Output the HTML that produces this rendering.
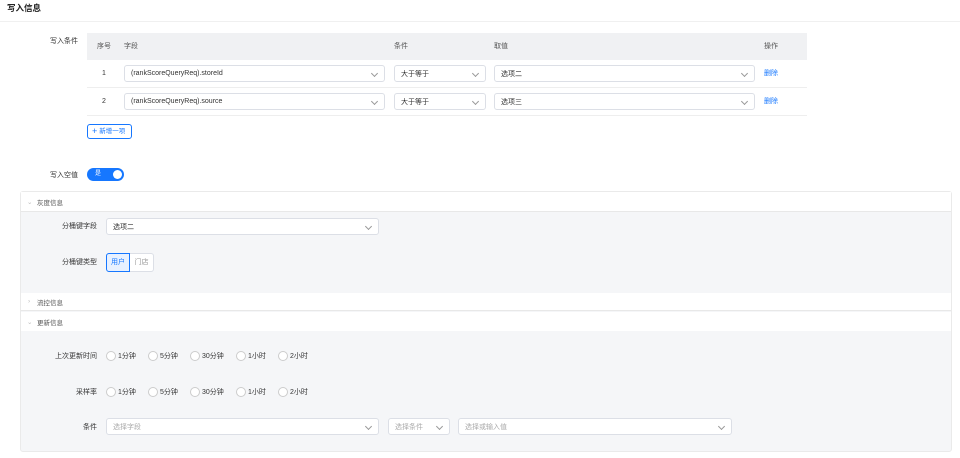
<!DOCTYPE html>
<html><head><meta charset="utf-8"><style>
*{box-sizing:border-box;margin:0;padding:0}
body{width:960px;height:458px;background:#fff;font-family:"Liberation Sans","Noto Sans CJK SC",sans-serif;font-size:7px;color:#333;position:relative;overflow:hidden}
.a{position:absolute;line-height:9px}
.sel{position:absolute;background:#fff;border:1px solid #dcdfe6;border-radius:3px;height:17px;display:flex;align-items:center;padding-left:6px;font-size:7px;color:#333}
.sel:after{content:"";position:absolute;right:7px;top:5px;width:4px;height:4px;border-right:1px solid #999;border-bottom:1px solid #999;transform:rotate(45deg)}
.ph{color:#aaa}
.lbl{position:absolute;text-align:right;font-size:7px;color:#333;line-height:9px}
.radio{position:absolute;font-size:7px;color:#333;padding-left:12px;height:9px;display:flex;align-items:center}
.radio:before{content:"";position:absolute;left:0;top:0;width:8px;height:8px;border:1px solid #ccc;border-radius:50%;background:#fff}
.sec{position:absolute;left:21px;width:930px;background:#fff;font-size:6.5px;color:#555;padding-left:16px;border-bottom:1px solid #e8e8e8;display:flex;align-items:center}
</style></head><body>
<div class="a" style="left:7px;top:4px;font-size:8.5px;font-weight:bold;color:#222">写入信息</div>
<div class="a" style="left:0;top:21px;width:960px;height:1px;background:#f0f0f0"></div>

<div class="lbl" style="left:40px;top:37px;width:38px">写入条件</div>
<div class="a" style="left:87px;top:33px;width:720px;height:27px;background:#f0f1f3"></div>
<div class="a" style="left:97px;top:42px;color:#555">序号</div>
<div class="a" style="left:124px;top:42px;color:#555">字段</div>
<div class="a" style="left:394px;top:42px;color:#555">条件</div>
<div class="a" style="left:494px;top:42px;color:#555">取值</div>
<div class="a" style="left:764px;top:42px;color:#555">操作</div>

<div class="a" style="left:102px;top:69px">1</div>
<div class="sel" style="left:124px;top:65px;width:261px">(rankScoreQueryReq).storeId</div>
<div class="sel" style="left:394px;top:65px;width:92px">大于等于</div>
<div class="sel" style="left:494px;top:65px;width:261px">选项二</div>
<div class="a" style="left:764px;top:69px;color:#1677ff">删除</div>
<div class="a" style="left:87px;top:87px;width:720px;height:1px;background:#eee"></div>

<div class="a" style="left:102px;top:97px">2</div>
<div class="sel" style="left:124px;top:93px;width:261px">(rankScoreQueryReq).source</div>
<div class="sel" style="left:394px;top:93px;width:92px">大于等于</div>
<div class="sel" style="left:494px;top:93px;width:261px">选项三</div>
<div class="a" style="left:764px;top:97px;color:#1677ff">删除</div>
<div class="a" style="left:87px;top:115px;width:720px;height:1px;background:#eee"></div>

<div class="a" style="left:87px;top:124px;width:45px;height:15px;border:1px solid #1677ff;border-radius:3px;color:#1677ff;display:flex;align-items:center;padding-left:4px;font-size:6.5px"><span style="font-size:9px;margin-right:2px">+</span>新增一项</div>

<div class="lbl" style="left:40px;top:171px;width:38px">写入空值</div>
<div class="a" style="left:87px;top:168px;width:37px;height:13px;border-radius:7px;background:#1677ff;color:#fff;font-size:6px;display:flex;align-items:center;padding-left:8px">是<span style="position:absolute;right:2px;top:2px;width:9px;height:9px;border-radius:50%;background:#fff"></span></div>

<div class="a" style="left:20px;top:191px;width:932px;height:261px;border:1px solid #eaeaea;border-radius:3px;background:#f5f6f8"></div>
<div class="sec" style="top:192px;height:20px"><span style="position:absolute;left:6px;color:#bbb">⌄</span>灰度信息</div>
<div class="lbl" style="left:50px;top:222px;width:47px">分桶键字段</div>
<div class="sel" style="left:106px;top:218px;width:273px">选项二</div>
<div class="lbl" style="left:50px;top:258px;width:47px">分桶键类型</div>
<div class="a" style="left:106px;top:253px;width:24px;height:19px;border:1px solid #1677ff;background:#e8f1ff;color:#1677ff;border-radius:3px 0 0 3px;display:flex;align-items:center;justify-content:center">用户</div>
<div class="a" style="left:130px;top:253px;width:24px;height:19px;border:1px solid #dcdfe6;border-left:none;background:#fff;color:#999;border-radius:0 3px 3px 0;display:flex;align-items:center;justify-content:center">门店</div>

<div class="sec" style="top:293px;height:18px"><span style="position:absolute;left:7px;color:#bbb">›</span>流控信息</div>
<div class="sec" style="top:312px;height:19px;border-bottom:none"><span style="position:absolute;left:6px;color:#bbb">⌄</span>更新信息</div>

<div class="lbl" style="left:40px;top:352px;width:57px">上次更新时间</div>
<div class="radio" style="left:106px;top:351px">1分钟</div>
<div class="radio" style="left:148px;top:351px">5分钟</div>
<div class="radio" style="left:190px;top:351px">30分钟</div>
<div class="radio" style="left:236px;top:351px">1小时</div>
<div class="radio" style="left:278px;top:351px">2小时</div>

<div class="lbl" style="left:40px;top:388px;width:57px">采样率</div>
<div class="radio" style="left:106px;top:387px">1分钟</div>
<div class="radio" style="left:148px;top:387px">5分钟</div>
<div class="radio" style="left:190px;top:387px">30分钟</div>
<div class="radio" style="left:236px;top:387px">1小时</div>
<div class="radio" style="left:278px;top:387px">2小时</div>

<div class="lbl" style="left:40px;top:423px;width:57px">条件</div>
<div class="sel ph" style="left:106px;top:418px;width:273px">选择字段</div>
<div class="sel ph" style="left:388px;top:418px;width:62px">选择条件</div>
<div class="sel ph" style="left:458px;top:418px;width:274px">选择或输入值</div>
</body></html>
